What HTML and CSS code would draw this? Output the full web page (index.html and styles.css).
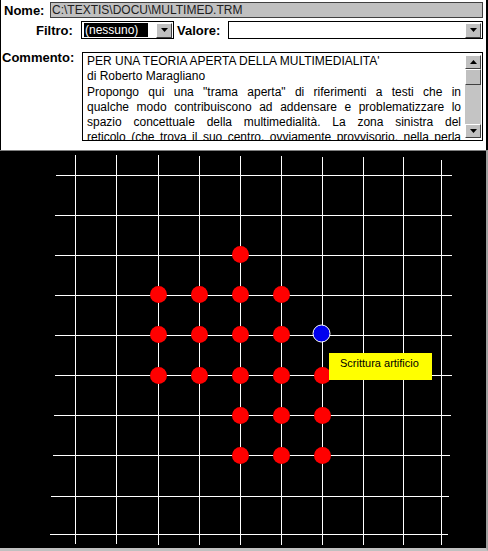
FILE: index.html
```html
<!DOCTYPE html>
<html>
<head>
<meta charset="utf-8">
<link rel="stylesheet" href="styles.css">
</head>
<body>
<div class="app">
  <div class="panel">
    <div class="row row-nome">
      <span class="lbl lbl-nome">Nome:</span>
      <div class="path">C:\TEXTIS\DOCU\MULTIMED.TRM</div>
    </div>
    <div class="row row-filtro">
      <span class="lbl lbl-filtro">Filtro:</span>
      <div class="combo combo-filtro">
        <span class="sel">(nessuno)</span>
        <span class="btn"><svg width="7" height="4" viewBox="0 0 7 4"><path d="M0 0H7L3.5 4Z" fill="#000"/></svg></span>
      </div>
      <span class="lbl lbl-valore">Valore:</span>
      <div class="combo combo-valore">
        <span class="empty"></span>
        <span class="btn"><svg width="7" height="4" viewBox="0 0 7 4"><path d="M0 0H7L3.5 4Z" fill="#000"/></svg></span>
      </div>
    </div>
    <div class="row row-comm">
      <span class="lbl lbl-comm">Commento:</span>
      <div class="memo">
        <div class="memo-text">
          <div>PER UNA TEORIA APERTA DELLA MULTIMEDIALITA'</div>
          <div>di Roberto Maragliano</div>
          <div class="just">Propongo qui una "trama aperta" di riferimenti a testi che in</div>
          <div class="just">qualche modo contribuiscono ad addensare e problematizzare lo</div>
          <div class="just">spazio concettuale della multimedialità. La zona sinistra del</div>
          <div class="just">reticolo (che trova il suo centro, ovviamente provvisorio, nella perla</div>
        </div>
        <div class="vscroll">
          <span class="sbtn"><svg width="7" height="4" viewBox="0 0 7 4"><path d="M0 4H7L3.5 0Z" fill="#000"/></svg></span>
          <span class="thumb"></span>
          <span class="track"></span>
          <span class="sbtn"><svg width="7" height="4" viewBox="0 0 7 4"><path d="M0 0H7L3.5 4Z" fill="#000"/></svg></span>
        </div>
      </div>
    </div>
  </div>
  <div class="canvas">
    <svg class="net" width="486" height="397" viewBox="0 151 486 397">
      <g stroke="#fff" stroke-width="1" shape-rendering="crispEdges">
        <line x1="75.5" y1="155" x2="75.5" y2="544"/>
        <line x1="116.5" y1="155" x2="116.5" y2="544"/>
        <line x1="158.5" y1="155" x2="158.5" y2="545"/>
        <line x1="199.5" y1="156" x2="199.5" y2="545"/>
        <line x1="240.5" y1="156" x2="240.5" y2="545"/>
        <line x1="281.5" y1="156" x2="281.5" y2="545"/>
        <line x1="322.5" y1="157" x2="322.5" y2="545"/>
        <line x1="363.5" y1="157" x2="363.5" y2="545"/>
        <line x1="403.5" y1="157" x2="403.5" y2="545"/>
        <line x1="441.5" y1="160" x2="441.5" y2="545"/>
        <line x1="56" y1="175.5" x2="452" y2="175.5"/>
        <line x1="55" y1="215.5" x2="452" y2="215.5"/>
        <line x1="55" y1="255.5" x2="452" y2="255.5"/>
        <line x1="55" y1="295.5" x2="452" y2="295.5"/>
        <line x1="55" y1="335.5" x2="452" y2="335.5"/>
        <line x1="55" y1="375.5" x2="452" y2="375.5"/>
        <line x1="54" y1="415.5" x2="451" y2="415.5"/>
        <line x1="53" y1="455.5" x2="450" y2="455.5"/>
        <line x1="51" y1="496.5" x2="449" y2="496.5"/>
        <line x1="50" y1="534.5" x2="448" y2="534.5"/>
      </g>
      <g fill="#ff0000">
        <circle cx="240.5" cy="254.5" r="8.5"/>
        <circle cx="158.5" cy="294.5" r="8.5"/>
        <circle cx="199.5" cy="294.5" r="8.5"/>
        <circle cx="240.5" cy="294.5" r="8.5"/>
        <circle cx="281.5" cy="294.5" r="8.5"/>
        <circle cx="158.5" cy="334.5" r="8.5"/>
        <circle cx="199.5" cy="334.5" r="8.5"/>
        <circle cx="240.5" cy="334.5" r="8.5"/>
        <circle cx="281.5" cy="334.5" r="8.5"/>
        <circle cx="158.5" cy="375.5" r="8.5"/>
        <circle cx="199.5" cy="375.5" r="8.5"/>
        <circle cx="240.5" cy="375.5" r="8.5"/>
        <circle cx="281.5" cy="375.5" r="8.5"/>
        <circle cx="322.5" cy="375.5" r="8.5"/>
        <circle cx="240.5" cy="415.5" r="8.5"/>
        <circle cx="281.5" cy="415.5" r="8.5"/>
        <circle cx="322.5" cy="415.5" r="8.5"/>
        <circle cx="240.5" cy="455.5" r="8.5"/>
        <circle cx="281.5" cy="455.5" r="8.5"/>
        <circle cx="322.5" cy="455.5" r="8.5"/>
      </g>
      <circle cx="321.5" cy="333.5" r="8.5" fill="#0000ee" stroke="#fff" stroke-width="1"/>
    </svg>
    <div class="tip">Scrittura artificio</div>
  </div>
</div>
</body>
</html>
```
FILE: styles.css
```css
html, body {
  margin: 0;
  padding: 0;
  background: #000;
}
.app {
  width: 488px;
  height: 551px;
  display: flex;
  flex-direction: column;
  font-family: "Liberation Sans", Arial, sans-serif;
}
.panel {
  height: 150px;
  box-sizing: border-box;
  background: #fff;
  border-left: 1px solid #000;
  border-right: 2px solid #000;
  padding: 2px 3px 0 1px;
  display: flex;
  flex-direction: column;
}
.row {
  display: flex;
  align-items: center;
}
.lbl {
  font-weight: bold;
  font-size: 13px;
  color: #000;
  white-space: nowrap;
}
.lbl-nome {
  margin-left: 2px;
  width: 46px;
}
.path {
  flex: 1;
  height: 16px;
  box-sizing: border-box;
  background: #c0c0c0;
  border: 1px solid #404040;
  font-size: 12px;
  line-height: 14px;
  padding-left: 1px;
  color: #202020;
}
.row-filtro {
  margin-top: 3px;
  height: 18px;
}
.lbl-filtro {
  margin-left: 34px;
  width: 45px;
}
.combo {
  height: 18px;
  box-sizing: border-box;
  border: 1px solid #000;
  display: flex;
  align-items: center;
  background: #fff;
}
.combo-filtro {
  width: 93px;
  padding-left: 2px;
}
.sel {
  background: #000;
  color: #fff;
  font-size: 12px;
  line-height: 14px;
  padding: 0 1px;
  width: 64px;
  box-sizing: border-box;
  outline: 1px dotted #fff;
}
.btn, .sbtn {
  width: 16px;
  height: 15px;
  box-sizing: border-box;
  background: #c0c0c0;
  border-top: 1px solid #fff;
  border-left: 1px solid #fff;
  border-right: 1px solid #404040;
  border-bottom: 1px solid #404040;
  display: flex;
  align-items: center;
  justify-content: center;
  margin-left: auto;
  margin-right: 1px;
}
.lbl-valore {
  margin-left: 3px;
  width: 51px;
}
.combo-valore {
  flex: 1;
}
.row-comm {
  margin-top: 10px;
  align-items: flex-start;
}
.lbl-comm {
  width: 80px;
  margin-top: 1px;
}
.memo {
  flex: 1;
  height: 89px;
  box-sizing: border-box;
  border: 1px solid #000;
  display: flex;
  overflow: hidden;
  margin-top: 3px;
}
.memo-text {
  flex: 1;
  padding: 1px 4px 0 4px;
  font-size: 12px;
  line-height: 15.3px;
  color: #000;
  overflow: hidden;
  white-space: nowrap;
}
.just {
  text-align: justify;
  text-align-last: justify;
}
.vscroll {
  width: 17px;
  display: flex;
  flex-direction: column;
  padding: 2px 0 2px 0;
  box-sizing: border-box;
  background: #fff;
}
.vscroll .sbtn {
  margin: 0;
  width: 16px;
  height: 14px;
  flex: none;
}
.thumb {
  width: 16px;
  height: 16px;
  box-sizing: border-box;
  background: #c0c0c0;
  border-top: 1px solid #fff;
  border-left: 1px solid #fff;
  border-right: 1px solid #404040;
  border-bottom: 1px solid #404040;
}
.track {
  flex: 1;
  width: 16px;
  background: #c4c4c4;
}
.canvas {
  flex: 1;
  position: relative;
  background: #000;
  border-top: 1px solid #808080;
  border-right: 2px solid #a0a0a0;
  border-bottom: 3px solid #c0c0c0;
}
.net {
  display: block;
}
.tip {
  position: absolute;
  left: 329px;
  top: 202px;
  width: 103px;
  height: 27px;
  background: #ffff00;
  font-size: 11px;
  line-height: 14px;
  padding: 3px 0 0 11px;
  box-sizing: border-box;
  color: #000;
}
```
